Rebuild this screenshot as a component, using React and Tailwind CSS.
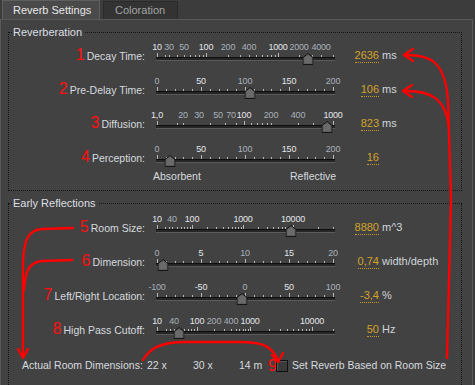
import React from "react";

const font = "font-['Liberation_Sans',Arial,sans-serif]";

// x position on the page for a value, interpolated in log space between anchors
const logX = (v, anchors) => {
  for (let i = 0; i < anchors.length - 1; i++) {
    const [v0, x0] = anchors[i];
    const [v1, x1] = anchors[i + 1];
    if (v >= v0 && v <= v1) {
      const t = (Math.log(v) - Math.log(v0)) / (Math.log(v1) - Math.log(v0));
      return x0 + t * (x1 - x0);
    }
  }
  return anchors[anchors.length - 1][1];
};

const decades = (from, to) => {
  const out = [];
  for (let d = from; d < to; d *= 10) {
    for (let k = 1; k < 10; k++) if (d * k <= to) out.push(d * k);
  }
  out.push(to);
  return [...new Set(out)];
};

const logTicks = (anchors, values, majors) =>
  values.map((v) => ({ x: logX(v, anchors), major: majors.includes(v) }));

const linTicks = () =>
  Array.from({ length: 21 }, (_, i) => ({ x: 156 + i * 8.8, major: i % 5 === 0 }));

const linLabels = (texts) => texts.map((t, i) => [t, 156 + i * 44, i % 2 === 1]);

const decayAnchors = [
  [10, 156], [30, 168], [50, 183], [100, 205], [200, 227], [400, 248],
  [1000, 277], [2000, 298], [4000, 320], [5000, 332],
];
const diffAnchors = [
  [1, 156], [20, 182], [30, 198], [50, 217], [70, 230], [100, 243],
  [200, 270], [400, 297], [1000, 332],
];
const roomAnchors = [[10, 156], [40, 171], [100, 191], [1000, 242], [10000, 292], [30000, 332]];
const hpAnchors = [
  [10, 156], [40, 173], [100, 196], [200, 213], [400, 230], [1000, 249],
  [10000, 311], [20000, 332],
];

const sliders = {
  decay: {
    labels: [["10", 156, 1], ["30", 168], ["50", 183], ["100", 205, 1], ["200", 227], ["400", 248], ["1000", 277, 1], ["2000", 298], ["4000", 320]],
    ticks: logTicks(decayAnchors, decades(10, 5000), [10, 100, 1000]),
    thumb: 307,
  },
  predelay: {
    labels: linLabels(["0", "50", "100", "150", "200"]),
    ticks: linTicks(),
    thumb: 249,
  },
  diffusion: {
    labels: [["1,0", 156, 1], ["20", 182], ["30", 198], ["50", 217], ["70", 230], ["100", 243, 1], ["200", 270], ["400", 297], ["1000", 332, 1]],
    ticks: logTicks(diffAnchors, [1, 10, ...decades(20, 1000).filter((v) => v >= 20)], [1, 100, 1000]),
    thumb: 326,
  },
  perception: {
    labels: linLabels(["0", "50", "100", "150", "200"]),
    ticks: linTicks(),
    thumb: 169,
  },
  room: {
    labels: [["10", 156, 1], ["40", 171], ["100", 191, 1], ["1000", 242, 1], ["10000", 292, 1]],
    ticks: logTicks(roomAnchors, decades(10, 30000), [10, 100, 1000, 10000]),
    thumb: 290,
  },
  dimension: {
    labels: linLabels(["0", "5", "10", "15", "20"]),
    ticks: linTicks(),
    thumb: 162,
  },
  lr: {
    labels: linLabels(["-100", "-50", "0", "50", "100"]),
    ticks: linTicks(),
    thumb: 241,
  },
  hp: {
    labels: [["10", 156, 1], ["40", 173], ["100", 196, 1], ["200", 213], ["400", 230], ["1000", 249, 1], ["10000", 311, 1]],
    ticks: logTicks(hpAnchors, decades(10, 20000), [10, 100, 1000, 10000]),
    thumb: 178,
  },
};

const Thumb = () => (
  <svg width="11" height="12" viewBox="0 0 11 12">
    <path d="M5.5 0.5 L10.5 4.5 L10.5 11.5 L0.5 11.5 L0.5 4.5 Z" fill="#5d5d5d" stroke="#141414" />
    <path d="M5.5 2 L9 4.8 L9 10 L2 10 L2 4.8 Z" fill="#6a6a6a" />
  </svg>
);

// slider box spans page x 150..338, track 155..333
const Slider = ({ data }) => (
  <div className="relative w-[188px] h-[34px] ml-[6px] shrink-0">
    {data.labels.map(([t, x, major]) => (
      <span
        key={t + x}
        className={`absolute top-[1px] -translate-x-1/2 text-[9px] leading-[12px] tracking-[-0.2px] ${major ? "text-[#e2e6ea]" : "text-[#a9b1ba]"}`}
        style={{ left: x - 150 }}
      >
        {t}
      </span>
    ))}
    {data.ticks.map((tk, i) => (
      <span
        key={i}
        className={`absolute w-px bg-[#b8b8b8] ${tk.major ? "top-[13px] h-[4px]" : "top-[15px] h-[2px]"}`}
        style={{ left: Math.round(tk.x - 150) }}
      />
    ))}
    <div className="absolute left-[5px] right-[4px] top-[17px] h-[4px] bg-[#262626] border-t border-[#0e0e0e] border-b border-b-[#5a5a5a]" />
    <div className="absolute top-[13px] -translate-x-1/2 flex" style={{ left: data.thumb - 150 }}>
      <Thumb />
    </div>
  </div>
);

const Row = ({ num, label, data, value, unit, className = "h-[34px]" }) => (
  <div className={`flex items-start ${className}`}>
    <div className="w-[136px] shrink-0 flex justify-end items-baseline pt-[8px]">
      <span className="text-[#ff1010] text-[16px] leading-[14px] mr-[2px]">{num}</span>
      <span className="text-[#d6dadf] text-[10.5px] leading-[14px] whitespace-nowrap">{label}</span>
    </div>
    <Slider data={data} />
    <div className="w-[40px] shrink-0 flex justify-end pt-[8px]">
      <span className="text-[#d4a22a] text-[11px] leading-[14px] border-b border-dotted border-[#c9981f]">{value}</span>
    </div>
    <span className="ml-[3px] pt-[8px] text-[#d0d5da] text-[11px] leading-[14px] whitespace-nowrap">{unit}</span>
  </div>
);

const Group = ({ title, className, children }) => (
  <fieldset className={`ml-[7px] w-[454px] border border-dotted border-[#141414] p-0 m-0 ${className}`}>
    <legend className="ml-[3px] px-[1px] pr-[3px] text-[#dcdfe3] text-[11px] leading-[14px]">{title}</legend>
    {children}
  </fieldset>
);

const Arrows = () => (
  <svg className="absolute top-0 left-0 pointer-events-none" width="475" height="385" viewBox="0 0 475 385" fill="none" stroke="#ff0000" strokeWidth="2.4" strokeLinecap="round" strokeLinejoin="round">
    <path d="M404 55 C432 54 445 63 448 100 L451 200 L447 358" />
    <path d="M413 49 L404 55 L413 61" />
    <path d="M403 91 C430 90 446 98 449 128" />
    <path d="M412 85 L403 91 L412 97" />
    <path d="M73 228 L42 229 C28 230 24 240 23 262 L23 357" />
    <path d="M72 260 L42 261 C30 262 25 270 24 290" />
    <path d="M18 349 L23 358 L28 349" />
    <path d="M143 360 C150 348 160 343 182 342 L240 342 C262 342 273 346 278 361" />
    <path d="M272 355 L278 362 L283 353" />
  </svg>
);

export default function App() {
  return (
    <div className={`relative w-[475px] h-[385px] overflow-hidden bg-[#3c3c3c] ${font}`}>
      <div className="h-[19px] flex items-end pl-[2px] gap-[3px]">
        <div className="w-[98px] h-[19px] bg-[#4a4a4a] border-t border-l border-r border-[#5e5e5e] flex items-center pl-[10px] text-[#e8e8e8] text-[11px]">
          Reverb Settings
        </div>
        <div className="w-[75px] h-[18px] bg-[#333333] border-t border-l border-r border-[#2a2a2a] flex items-center pl-[11px] text-[#a3a3a3] text-[11px]">
          Coloration
        </div>
      </div>
      <div className="h-[366px] mr-[2px] bg-[#424242] border-t border-l border-r border-[#585858] pt-[5px]">
        <Group title="Reverberation" className="pt-[1px] pb-[6px]">
          <Row num="1" label="Decay Time:" data={sliders.decay} value="2636" unit="ms" />
          <Row num="2" label="Pre-Delay Time:" data={sliders.predelay} value="106" unit="ms" />
          <Row num="3" label="Diffusion:" data={sliders.diffusion} value="823" unit="ms" />
          <Row num="4" label="Perception:" data={sliders.perception} value="16" unit="" className="h-[28px]" />
          <div className="flex h-[14px] items-center text-[#d6dadf] text-[10.5px]">
            <span className="w-[144px] shrink-0" />
            <span className="w-[137px] shrink-0">Absorbent</span>
            <span>Reflective</span>
          </div>
        </Group>
        <Group title="Early Reflections" className="mt-[5px] pt-[2px] pb-[12px]">
          <Row num="5" label="Room Size:" data={sliders.room} value="8880" unit="m^3" />
          <Row num="6" label="Dimension:" data={sliders.dimension} value="0,74" unit="width/depth" />
          <Row num="7" label="Left/Right Location:" data={sliders.lr} value="-3,4" unit="%" />
          <Row num="8" label="High Pass Cutoff:" data={sliders.hp} value="50" unit="Hz" />
          <div className="mt-[6px] h-[24px] flex items-center pl-[13px] text-[#d6dadf] text-[10.5px] whitespace-nowrap">
            <span className="w-[125px] shrink-0">Actual Room Dimensions:</span>
            <span className="w-[46px] shrink-0">22 x</span>
            <span className="w-[46px] shrink-0">30 x</span>
            <span className="w-[29px] shrink-0">14 m</span>
            <span className="w-[8px] shrink-0 text-[#ff1010] text-[16px] leading-[14px]">9</span>
            <span className="w-[12px] h-[12px] shrink-0 bg-[#3a3a3a] border border-[#101010] shadow-[inset_1px_1px_0_#555]" />
            <span className="ml-[4px]">Set Reverb Based on Room Size</span>
          </div>
        </Group>
      </div>
      <Arrows />
    </div>
  );
}
